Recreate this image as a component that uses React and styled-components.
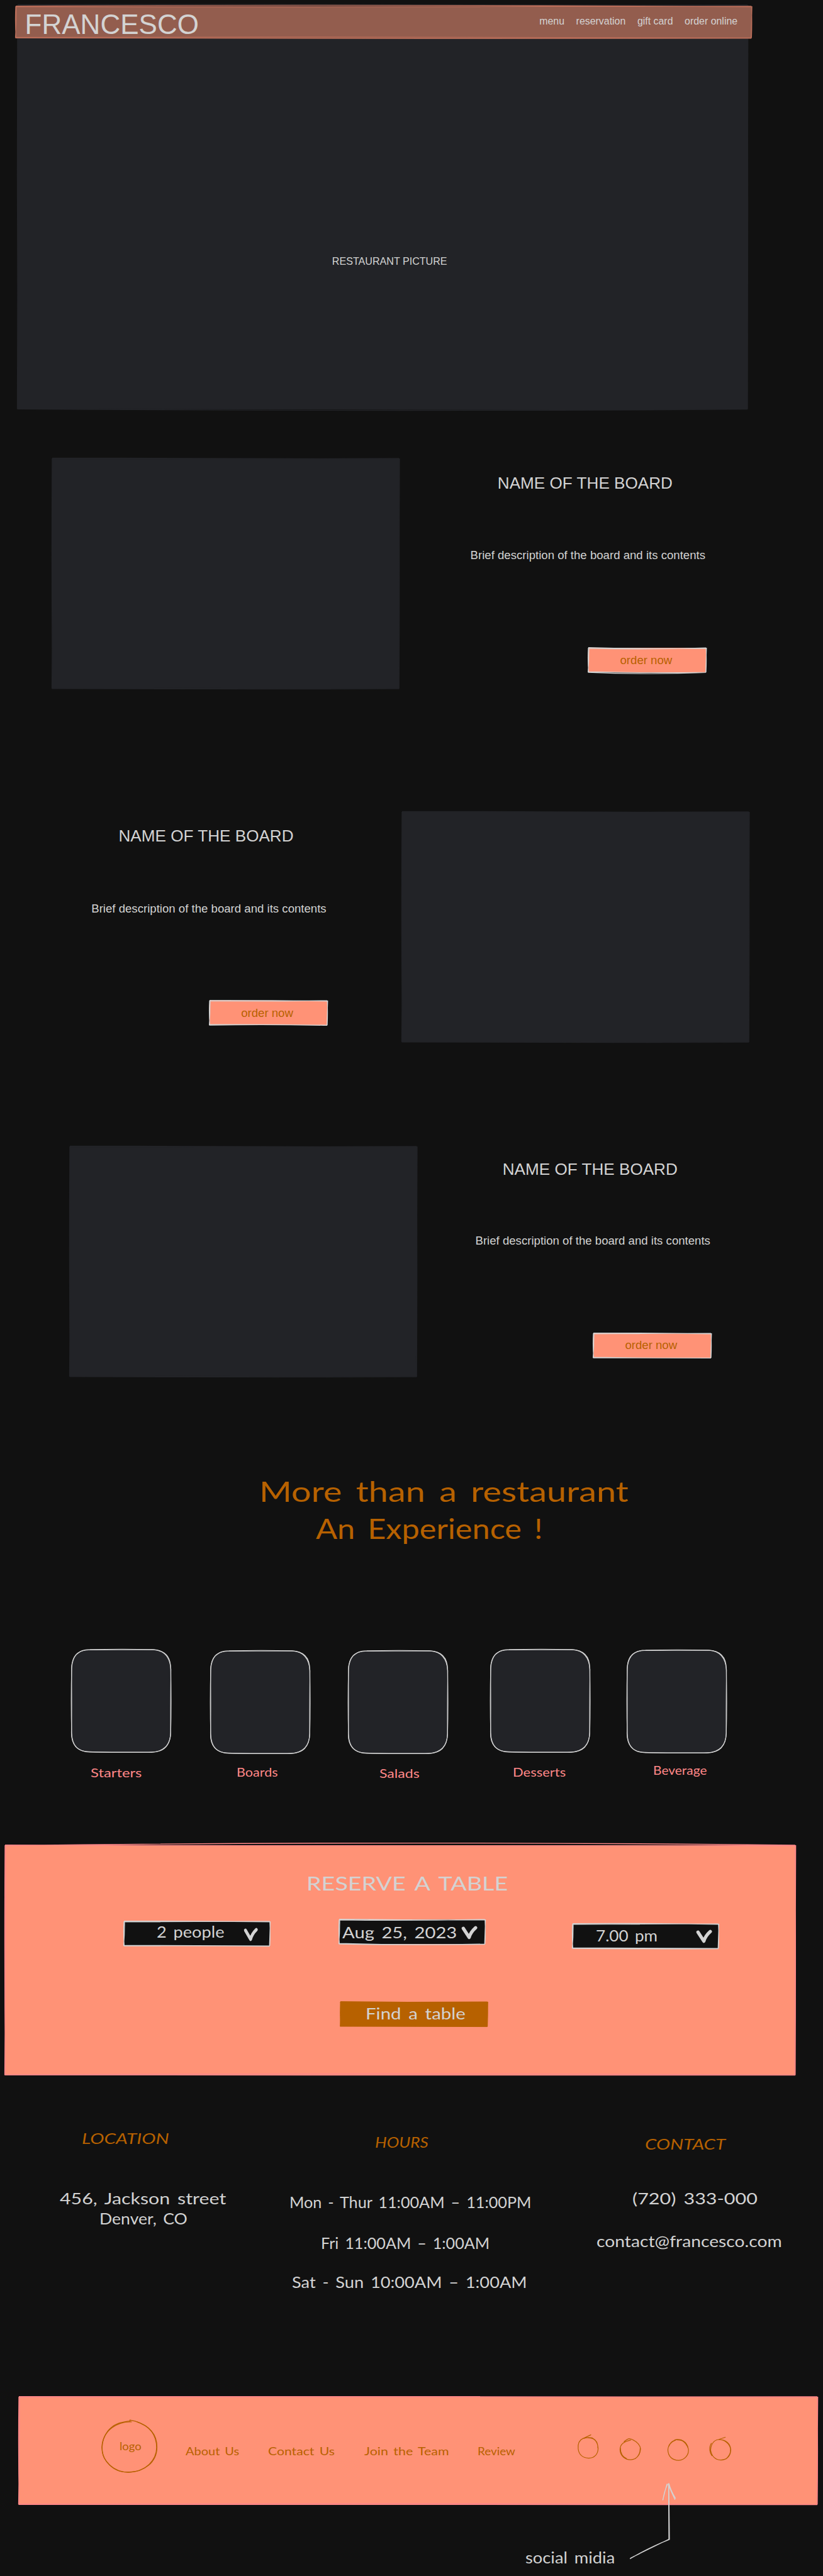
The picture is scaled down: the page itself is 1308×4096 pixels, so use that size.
import React, { useLayoutEffect, useRef, useState } from "react";
import styled, { createGlobalStyle } from "styled-components";

const SCALE = 0.931;
const u = (n = 0) => `${+(n * SCALE).toFixed(3)}px`;

const ink = "#d3d3d3";
const brown = "#b76100";
const salmon = "#ff9276";
const panel = "#222327";
const night = "#111111";
const pink = "#ff8787";

const Global = createGlobalStyle`
  html, body { margin: 0; background: ${night}; }
  *, *::before, *::after { box-sizing: border-box; }
  h1, h2, h3, p { margin: 0; font-weight: 400; }
`;

const Page = styled.main`
  width: 1308px;
  height: 4096px;
  overflow: hidden;
  display: flex;
  flex-direction: column;
  align-items: flex-start;
  background: ${night};
  color: ${ink};
  font-family: "Liberation Sans", Arial, sans-serif;
`;

/* ---------- hand-drawn outlines ---------- */

const Overlay = styled.svg`
  position: absolute;
  left: 0;
  top: 0;
  width: 100%;
  height: 100%;
  overflow: visible;
  pointer-events: none;
`;

const edge = (x1, y1, x2, y2, bx, by) =>
  `M${x1} ${y1}Q${(x1 + x2) / 2 + bx} ${(y1 + y2) / 2 + by} ${x2} ${y2}`;

/* bow: top a, top b, bottom a, bottom b — how far each stroke sags downwards */
function RoughEdges({ w, h, color, stroke = 1.5, bow = [1, -1, 1, -1], tilt = 1 }) {
  const [ta, tb, ba, bb] = bow;
  const d = [
    edge(-0.5, tilt, w, 0, 0, ta * 2),
    edge(0, -tilt * 0.5, w + 0.5, tilt, 0, tb * 2),
    edge(0, h - tilt, w, h, 0, ba * 2),
    edge(-0.5, h, w, h + tilt * 0.5, 0, bb * 2),
    edge(0, 0, 0.5, h, -1.5, 0),
    edge(1, 0, -0.5, h, 1, 0),
    edge(w, 0, w, h, 1, 0),
    edge(w + 0.8, 0, w - 0.6, h, 0, 0),
  ].join("");
  return (
    <Overlay viewBox={`0 0 ${w} ${h}`} preserveAspectRatio="none">
      <path d={d} fill="none" stroke={color} strokeWidth={stroke} />
    </Overlay>
  );
}

/* ---------- text ---------- */

const HandLine = styled.p`
  flex: none;
  width: ${(p) => u(p.$w)};
  margin-top: ${(p) => u(p.$mt)};
  margin-left: ${(p) => u(p.$ml)};
  font-family: Lato, "Open Sans", sans-serif;
  font-size: ${(p) => u(p.$size)};
  font-style: ${(p) => (p.$slant ? "italic" : "normal")};
  line-height: 1.25;
  white-space: pre;
  word-spacing: 0.14em;
  color: ${(p) => p.$color || ink};
  position: relative;
`;

const HandText = styled.span`
  display: inline-block;
  transform-origin: 0 0;
`;

/* Widens the letters so that the line takes exactly its given width. */
function Hand({ w, mt, ml, size, color, slant, as, children }) {
  const ref = useRef(null);
  const [stretch, setStretch] = useState(1);
  useLayoutEffect(() => {
    setStretch((w * SCALE) / ref.current.offsetWidth);
  }, [w]);
  return (
    <HandLine as={as} $w={w} $mt={mt} $ml={ml} $size={size} $color={color} $slant={slant}>
      <HandText ref={ref} style={{ transform: `translateY(${size * 0.045}px) scaleX(${stretch})` }}>
        {children}
      </HandText>
    </HandLine>
  );
}

/* ---------- hero ---------- */

const Hero = styled.section`
  position: relative;
  width: ${u(1246)};
  height: ${u(690)};
  margin: ${u(9)} 0 0 ${u(30)};
  display: flex;
  flex-direction: column;
  background: ${panel};
`;

const TopBar = styled.header`
  position: relative;
  flex: none;
  width: ${u(1256)};
  height: ${u(54)};
  margin: ${u(2)} 0 0 ${u(-3)};
  padding: 0 ${u(24)} 0 ${u(15.5)};
  display: flex;
  justify-content: space-between;
  background: #935d4e;
`;

const Brand = styled.h1`
  font-size: ${u(47.3)};
  line-height: ${u(59)};
  margin-top: ${u(2)};
  position: relative;
`;

const TopNav = styled.nav`
  position: relative;
  display: flex;
  gap: ${u(20)};
  margin-top: ${u(14.8)};
  font-size: ${u(17.1)};
  line-height: ${u(21.4)};
`;

const HeroCaption = styled.p`
  margin: ${u(369.5)} 0 0 ${u(537)};
  font-size: ${u(17.3)};
  line-height: ${u(21.5)};
`;

/* ---------- boards ---------- */

const BoardRow = styled.section`
  display: flex;
  flex-direction: ${(p) => (p.$flip ? "row-reverse" : "row")};
  align-items: flex-start;
  gap: ${(p) => u(p.$gap)};
  height: ${u(394.5)};
  margin: ${(p) => u(p.$mt)} 0 0 ${(p) => u(p.$ml)};
`;

const Photo = styled.div`
  position: relative;
  width: ${u(592)};
  height: ${u(393)};
  margin-top: ${u(0.5)};
  background: ${panel};
`;

const BoardText = styled.div`
  display: flex;
  flex-direction: column;
  width: ${u(403)};
  padding-top: ${(p) => u(p.$pt)};
`;

const BoardName = styled.h2`
  margin-left: ${u(46.5)};
  font-size: ${u(28.05)};
  line-height: ${u(35)};
  white-space: nowrap;
`;

const BoardInfo = styled.p`
  margin-top: ${(p) => u(p.$mt)};
  font-size: ${u(20)};
  line-height: ${u(25)};
  white-space: nowrap;
`;

const OrderButton = styled.button`
  position: relative;
  align-self: flex-end;
  width: ${u(201)};
  height: ${u(42)};
  margin: ${u(145.4)} ${u(0.5)} 0 0;
  padding: 0 ${u(4)} ${u(0.5)} 0;
  border: 0;
  background: ${salmon};
  color: ${brown};
  font: inherit;
  font-size: ${u(20)};
  line-height: ${u(25)};
`;

function Board({ flip, gap, mt, ml, pt, infoGap, bow }) {
  return (
    <BoardRow $flip={flip} $gap={gap} $mt={mt} $ml={ml}>
      <Photo>
        <RoughEdges w={592} h={393} color={panel} bow={[0.6, -0.6, 0.6, 0.5]} />
      </Photo>
      <BoardText $pt={pt}>
        <BoardName>NAME OF THE BOARD</BoardName>
        <BoardInfo $mt={infoGap}>Brief description of the board and its contents</BoardInfo>
        <OrderButton>
          order now
          <RoughEdges w={201} h={42} color={ink} stroke={1.2} bow={bow} />
        </OrderButton>
      </BoardText>
    </BoardRow>
  );
}

/* ---------- slogan and categories ---------- */

const Slogan = styled.section`
  display: flex;
  flex-direction: column;
  margin: ${u(163)} 0 0 ${u(442)};
`;

const Categories = styled.section`
  display: flex;
  align-items: flex-start;
  height: ${u(225)};
  margin: ${u(176.6)} 0 0 ${u(121)};
`;

const Category = styled.div`
  display: flex;
  flex-direction: column;
  width: ${u(171)};
  margin: ${(p) => u(p.$mt)} 0 0 ${(p) => u(p.$ml)};
`;

const Tile = styled.svg`
  display: block;
  width: ${u(171)};
  height: ${u(177)};
  overflow: visible;
`;

const categories = [
  { name: "Starters", ml: 0, mt: 0, labelMt: 21.8, labelMl: 34, w: 88 },
  { name: "Boards", ml: 67, mt: 2, labelMt: 18.8, labelMl: 45, w: 71 },
  { name: "Salads", ml: 64, mt: 2, labelMt: 21.3, labelMl: 54, w: 68 },
  { name: "Desserts", ml: 72, mt: 0, labelMt: 21.3, labelMl: 38, w: 90 },
  { name: "Beverage", ml: 62, mt: 1, labelMt: 16.3, labelMl: 45, w: 92 },
];

function TileShape() {
  return (
    <Tile viewBox="0 0 171 177" fill="none" stroke={ink} strokeWidth="1.3">
      <path
        fill={panel}
        d="M32 1C70 0 105 0 139 1Q170 2 170 33C171 72 171 108 170 144Q168 176 139 176C104 177 68 176 32 176Q2 176 1 144C0 108 0 70 1 32Q3 1 32 1Z"
      />
      <path d="M30 1.6C70 1 102 1.6 141 1.2Q168 3 170.4 35C170 74 169.6 110 170 142Q170 174 137 176.6C102 176 70 177.6 31 175.4Q0 175 .6 142C1.4 104 .8 72 .8 34Q1 2 30 1.6Z" />
    </Tile>
  );
}

/* ---------- reservation ---------- */

const Reserve = styled.section`
  position: relative;
  width: ${u(1349)};
  height: ${u(392.5)};
  margin: ${u(110)} 0 0 ${u(9)};
  padding-top: ${u(44.6)};
  display: flex;
  flex-direction: column;
  align-items: flex-start;
  background: ${salmon};
`;

const Fields = styled.div`
  display: flex;
  align-items: flex-start;
  height: ${u(51)};
  margin: ${u(41.1)} 0 0 ${u(203)};
`;

const Field = styled.div`
  position: relative;
  display: flex;
  align-items: flex-start;
  width: ${u(249)};
  height: ${u(42)};
  margin: ${(p) => u(p.$mt)} 0 0 ${(p) => u(p.$ml)};
  background: ${night};
`;

const Chevron = styled.svg`
  flex: none;
  width: ${(p) => u(p.$w)};
  height: ${u(22)};
  margin: ${(p) => u(p.$mt)} 0 0 ${(p) => u(p.$ml)};
  overflow: visible;
`;

const fields = [
  { text: "2 people", ml: 0, mt: 3, textMl: 55, textMt: 0.7, w: 115, vMl: 35, vMt: 12, vW: 23, bow: [0, -0.3, 0, -0.5] },
  { text: "Aug 25, 2023", ml: 118, mt: 0, textMl: 5, textMt: 4.7, w: 196, vMl: 8, vMt: 12.5, vW: 26, bow: [1, 0.5, 1.5, 1] },
  { text: "7.00 pm", ml: 150, mt: 8, textMl: 39, textMt: 1.7, w: 105, vMl: 67, vMt: 10.5, vW: 26, bow: [0, -0.8, 0, 0.5] },
];

const FindButton = styled.div`
  position: relative;
  width: ${u(251)};
  height: ${u(42)};
  margin: ${u(90)} 0 0 ${u(572)};
  display: flex;
  align-items: flex-start;
  background: ${brown};
`;

/* ---------- visit info ---------- */

const Info = styled.section`
  display: flex;
  align-items: flex-start;
  height: ${u(550.5)};
  padding-left: ${u(102)};
`;

const InfoColumn = styled.div`
  display: flex;
  flex-direction: column;
  width: ${(p) => u(p.$w)};
  margin-left: ${(p) => u(p.$ml)};
`;

/* ---------- footer ---------- */

const Footer = styled.footer`
  position: relative;
  display: flex;
  align-items: flex-start;
  width: ${u(1363)};
  height: ${u(184)};
  margin-left: ${u(32)};
  background: ${salmon};
`;

const Logo = styled.div`
  position: relative;
  display: flex;
  align-items: flex-start;
  width: ${u(95)};
  height: ${u(89)};
  margin: ${u(40)} 0 0 ${u(141)};
`;

const FooterNav = styled.nav`
  display: flex;
  margin: ${u(80.8)} 0 0 ${u(49)};
`;

const Socials = styled.div`
  display: flex;
  align-items: flex-start;
  margin-left: ${u(107)};
`;

const SocialRing = styled.svg`
  width: ${u(35.5)};
  height: ${u(35.5)};
  margin: ${(p) => u(p.$mt)} 0 0 ${(p) => u(p.$ml)};
  overflow: visible;
`;

const rings = [
  { mt: 69, ml: 0, d: "M23-5L10 1C3 4 0 9 1 19C2 29 9 35 19 35C29 35 35 28 35 18C34 7 29 0 18 .5M10 1.5C14-.5 20-.5 25 .5C32 4 35 10 34.5 18" },
  { mt: 71, ml: 36.5, d: "M19 2C8 4 0 9 .5 19C1 29 9 36 19 35.5C28 35 35 28 35.5 17C34 8 26 2 16-.5C12 0 10 3 7 5M16-.5C22 0 33 7 35 15C35 25 31 31 26 34M1 15C1 24 5 31 12 34" },
  { mt: 72.5, ml: 46, d: "M12 .5C22 0 30 1 35.5 16C37 26 29 35.5 19 35.5C8 35.5 1 29 .5 18C1 8 8 2 14 1M14 0C26-1 32 4 35 14M2 12C4 6 8 3 14 1" },
  { mt: 73, ml: 37, d: "M27-4L15 0C7 1 2 8 1.5 18C3 28 9 35 19 35C29 35 36 28 36 17C35 7 28 .5 17 0M3 6C-2 14 0 23 4 28M15 0C25 0 34 7 35.5 16C36 24 33 28 28 33" },
];

const Note = styled.div`
  position: relative;
  margin: ${u(72.7)} 0 0 ${u(897)};
`;

const Arrow = styled.svg`
  position: absolute;
  left: ${u(173)};
  top: ${u(-115.7)};
  width: ${u(90)};
  height: ${u(140)};
`;

export default function App() {
  return (
    <>
      <Global />
      <Page>
        <Hero>
          <RoughEdges w={1246} h={690} color={panel} bow={[0, -1, 1, 2]} />
          <TopBar>
            <RoughEdges w={1256} h={54} color="#b96d59" stroke={1.4} bow={[0, -2, -1, 1]} />
            <Brand>FRANCESCO</Brand>
            <TopNav>
              <span>menu</span>
              <span>reservation</span>
              <span>gift card</span>
              <span>order online</span>
            </TopNav>
          </TopBar>
          <HeroCaption>RESTAURANT PICTURE</HeroCaption>
        </Hero>

        <Board gap={122} mt={84} ml={89} pt={24.8} infoGap={93} bow={[1.5, 1, 1, 2]} />
        <Board flip gap={127} mt={208.5} ml={156} pt={24.8} infoGap={93} bow={[0.5, -0.5, -0.5, -1]} />
        <Board gap={100} mt={177.5} ml={119.500} pt={21.5} infoGap={92} bow={[0, -0.5, 0.5, 0]} />

        <Slogan>
          <Hand as="h2" w={631} size={48} color={brown}>More than a restaurant</Hand>
          <Hand as="h2" w={387} ml={97} mt={4} size={48} color={brown}>An Experience !</Hand>
        </Slogan>

        <Categories>
          {categories.map((c) => (
            <Category key={c.name} $ml={c.ml} $mt={c.mt}>
              <TileShape />
              <Hand w={c.w} mt={c.labelMt} ml={c.labelMl} size={20} color={pink}>{c.name}</Hand>
            </Category>
          ))}
        </Categories>

        <Reserve>
          <RoughEdges w={1349} h={392.5} color={pink} stroke={1.4} bow={[-4, 1.5, -2, 0]} tilt={0.6} />
          <Hand as="h2" w={344} ml={514} size={33}>RESERVE A TABLE</Hand>
          <Fields>
            {fields.map((f) => (
              <Field key={f.text} $ml={f.ml} $mt={f.mt}>
                <RoughEdges w={249} h={42} color={ink} stroke={1.3} bow={f.bow} />
                <Hand w={f.w} ml={f.textMl} mt={f.textMt} size={27}>{f.text}</Hand>
                <Chevron $w={f.vW} $ml={f.vMl} $mt={f.vMt} viewBox="0 0 26 22" preserveAspectRatio="none">
                  <path
                    d="M2.5 3.500L12.5 19Q15 10 23.5 2.5"
                    fill="none"
                    stroke={ink}
                    strokeWidth="5.6"
                    strokeLinecap="round"
                    strokeLinejoin="round"
                  />
                </Chevron>
              </Field>
            ))}
          </Fields>
          <FindButton>
            <RoughEdges w={251} h={42} color={brown} stroke={1} bow={[0, 0.4, 0, 0]} />
            <Hand w={170} ml={43} mt={2.7} size={27}>Find a table</Hand>
          </FindButton>
        </Reserve>

        <Info>
          <InfoColumn $w={284}>
            <Hand as="h3" slant w={149} ml={38} mt={92.2} size={25} color={brown}>LOCATION</Hand>
            <Hand w={284} mt={70.7} size={26}>456, Jackson street</Hand>
            <Hand w={150} ml={68} mt={2.5} size={26}>Denver, CO</Hand>
          </InfoColumn>
          <InfoColumn $w={413} $ml={108}>
            <Hand as="h3" slant w={91} ml={146} mt={99.2} size={25} color={brown}>HOURS</Hand>
            <Hand w={413} mt={70.7} size={26}>Mon - Thur 11:00AM – 11:00PM</Hand>
            <Hand w={288} ml={54} mt={37.5} size={26}>Fri 11:00AM – 1:00AM</Hand>
            <Hand w={401} ml={4} mt={33.5} size={26}>Sat - Sun 10:00AM – 1:00AM</Hand>
          </InfoColumn>
          <InfoColumn $w={316} $ml={111}>
            <Hand as="h3" slant w={138} ml={83} mt={102.2} size={25} color={brown}>CONTACT</Hand>
            <Hand w={214} ml={61} mt={60.7} size={26}>(720) 333-000</Hand>
            <Hand w={316} mt={40.5} size={26}>contact@francesco.com</Hand>
          </InfoColumn>
        </Info>

        <Footer>
          <RoughEdges w={1363} h={184} color={pink} stroke={1.4} bow={[0, -0.5, -1.5, 0]} tilt={0.6} />
          <Logo>
            <Overlay viewBox="0 0 95 89" preserveAspectRatio="none" fill="none" stroke={brown} strokeWidth="1.4">
              <path d="M52 2C28 1 2 16 1 46C1 70 22 88 46 88C72 88 95 72 95 45C95 22 80 8 58 1L49-1V2" />
              <path d="M49 .5C34 3 22 4 11 18C-1 34-2 56 9 70C20 84 32 89 50 88C76 86 94 68 94.5 46C94 24 82 9 61 2" />
            </Overlay>
            <Hand w={37} ml={31} mt={31.8} size={19} color={brown}>logo</Hand>
          </Logo>
          <FooterNav>
            <Hand w={91} size={18} color={brown}>About Us</Hand>
            <Hand w={114} ml={50} size={18} color={brown}>Contact Us</Hand>
            <Hand w={144} ml={50} size={18} color={brown}>Join the Team</Hand>
            <Hand w={64} ml={49} size={18} color={brown}>Review</Hand>
          </FooterNav>
          <Socials>
            {rings.map((r) => (
              <SocialRing key={r.d} $mt={r.mt} $ml={r.ml} viewBox="0 0 35.5 35.5" fill="none" stroke={brown} strokeWidth="1.3">
                <path d={r.d} />
              </SocialRing>
            ))}
          </Socials>
        </Footer>

        <Note>
          <Hand w={153} size={27}>social midia</Hand>
          <Arrow viewBox="0 0 90 140" fill="none" stroke={ink} strokeWidth="1.4" strokeLinejoin="round">
            <path d="M6 134L72 101.5L71.5 6M5.5 135Q40 115 73 102L72 8M70 7Q64 20 62 34M69 7Q65 20 61.5 35M72 6Q75 18 83.5 32M71 8Q76 20 82.5 34" />
          </Arrow>
        </Note>
      </Page>
    </>
  );
}
